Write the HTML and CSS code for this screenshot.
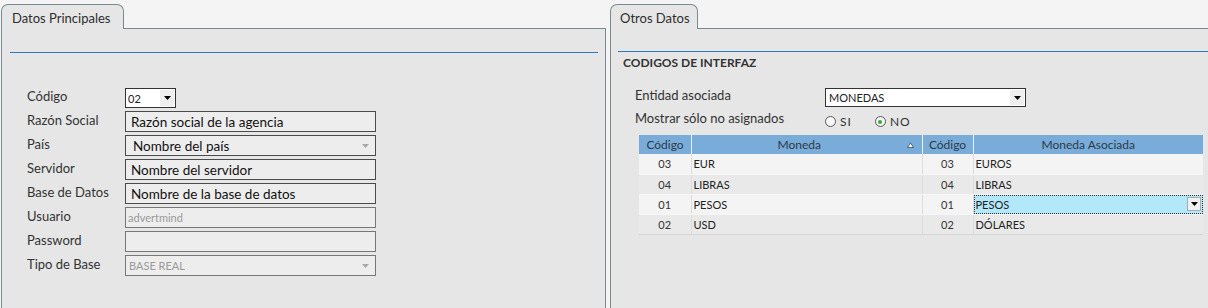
FILE: index.html
```html
<!DOCTYPE html>
<html lang="es">
<head>
    <meta charset="UTF-8">
    <title>Agencia</title>
    <link rel="stylesheet" href="styles.css">
</head>
<body>
    <div class="screen">
        <div class="pane pane-main">
            <div class="tabbar"><div class="tab">Datos Principales</div></div>
            <div class="panel">
                <div class="rule rule-main"></div>
                <div class="form">
                    <div class="label">Código</div>
                    <div class="combo combo-code">
                        <span class="value">02</span>
                        <span class="drop"><svg width="7" height="4" viewBox="0 0 7 4"><path d="M0 0h7L3.5 4z"/></svg></span>
                    </div>

                    <div class="label">Razón Social</div>
                    <div class="field">Razón social de la agencia</div>

                    <div class="label">País</div>
                    <div class="field field-select">
                        <span class="value">Nombre del país</span>
                        <svg class="ghost-arrow" width="7" height="4" viewBox="0 0 7 4"><path d="M0 0h7L3.5 4z"/></svg>
                    </div>

                    <div class="label">Servidor</div>
                    <div class="field">Nombre del servidor</div>

                    <div class="label">Base de Datos</div>
                    <div class="field">Nombre de la base de datos</div>

                    <div class="label">Usuario</div>
                    <div class="field field-off">advertmind</div>

                    <div class="label">Password</div>
                    <div class="field field-off"></div>

                    <div class="label">Tipo de Base</div>
                    <div class="field field-off field-select">
                        <span class="value">BASE REAL</span>
                        <svg class="ghost-arrow" width="7" height="4" viewBox="0 0 7 4"><path d="M0 0h7L3.5 4z"/></svg>
                    </div>
                </div>
            </div>
        </div>

        <div class="pane pane-other">
            <div class="tabbar"><div class="tab">Otros Datos</div></div>
            <div class="panel">
                <div class="rule rule-other"></div>
                <div class="section-title">CODIGOS DE INTERFAZ</div>
                <div class="form form-other">
                    <div class="label">Entidad asociada</div>
                    <div class="combo combo-entity">
                        <span class="value">MONEDAS</span>
                        <span class="drop"><svg width="7" height="4" viewBox="0 0 7 4"><path d="M0 0h7L3.5 4z"/></svg></span>
                    </div>

                    <div class="label">Mostrar sólo no asignados</div>
                    <div class="radios">
                        <span class="radio"></span><span class="radio-text">SI</span>
                        <span class="radio radio-on"></span><span class="radio-text">NO</span>
                    </div>
                </div>

                <table class="grid">
                    <colgroup>
                        <col style="width: 52px">
                        <col style="width: 231px">
                        <col style="width: 51px">
                        <col style="width: 230px">
                    </colgroup>
                    <thead>
                        <tr>
                            <th>Código</th>
                            <th class="sorted"><span>Moneda</span><svg width="7" height="6" viewBox="0 0 7 6"><path d="M3.5 0.8L6.4 5.5H0.6z" fill="#fff" stroke="#3a4a5a" stroke-width="0.8"/></svg></th>
                            <th>Código</th>
                            <th>Moneda Asociada</th>
                        </tr>
                    </thead>
                    <tbody>
                        <tr><td class="code">03</td><td>EUR</td><td class="code">03</td><td>EUROS</td></tr>
                        <tr><td class="code">04</td><td>LIBRAS</td><td class="code">04</td><td>LIBRAS</td></tr>
                        <tr>
                            <td class="code">01</td><td>PESOS</td><td class="code">01</td>
                            <td class="editing">
                                <div class="cell-edit">
                                    <span class="value">PESOS</span>
                                    <span class="drop"><svg width="7" height="4" viewBox="0 0 7 4"><path d="M0 0h7L3.5 4z"/></svg></span>
                                </div>
                            </td>
                        </tr>
                        <tr><td class="code">02</td><td>USD</td><td class="code">02</td><td>DÓLARES</td></tr>
                    </tbody>
                </table>
            </div>
        </div>
    </div>
</body>
</html>
```

FILE: styles.css
```css
* {
    margin: 0;
    padding: 0;
    box-sizing: border-box;
}

body {
    font-family: Lato, "Noto Sans", sans-serif;
    background-color: #f4f4f4;
    color: #333;
    height: 308px;
    overflow: hidden;
}

.screen {
    display: flex;
    height: 308px;
}

.pane {
    display: flex;
    flex-direction: column;
}

.pane-main {
    width: 605px;
    margin-left: 1px;
}

.pane-other {
    flex: 1;
    margin-left: 4px;
    margin-right: -10px;
}

.tabbar {
    height: 28px;
    display: flex;
    align-items: flex-end;
}

.tab {
    position: relative;
    z-index: 1;
    height: 25px;
    margin-bottom: -1px;
    padding: 5px 0 0 10px;
    background-color: #e6e6e6;
    border: 1px solid #7b8a8e;
    border-bottom: none;
    border-radius: 7px 7px 0 0;
    font-size: 13px;
    color: #2e2e2e;
}

.pane-main .tab {
    width: 123px;
}

.pane-other .tab {
    width: 88px;
    padding-left: 9px;
}

.panel {
    flex: 1;
    background-color: #e6e6e6;
    border: 1px solid #7b8a8e;
    border-bottom: none;
}

.rule {
    border-top: 1px solid #2a7bc4;
}

.rule-main {
    margin: 23px 7px 0 8px;
}

.rule-other {
    margin: 22px 0 0 7px;
}

.section-title {
    margin: 4px 0 0 12px;
    font-size: 12px;
    font-weight: bold;
    line-height: 14px;
    color: #333;
}

.form {
    display: grid;
    grid-template-columns: 98px 251px;
    grid-auto-rows: 21px;
    row-gap: 3px;
    padding-left: 25px;
    margin-top: 34px;
}

.label {
    font-size: 13px;
    line-height: 18px;
    color: #333;
}

.field {
    display: flex;
    align-items: center;
    height: 21px;
    padding-left: 5px;
    background-color: #ededed;
    border: 1px solid #4a4a4a;
    font-size: 13.5px;
    color: #111;
}

.field-select {
    padding-left: 7px;
}

.field-select .value {
    flex: 1;
}

.ghost-arrow {
    fill: #aaa;
    margin-right: 6px;
}

.field-off {
    padding-left: 2px;
    border-color: #777;
    font-size: 11px;
    color: #9a9a9a;
}

.field-off.field-select {
    padding-left: 3px;
}

.combo {
    display: flex;
    align-items: center;
    background-color: #fff;
    border: 1px solid #333;
    font-size: 11px;
    color: #222;
}

.combo .value {
    flex: 1;
    padding-left: 2px;
}

.combo .drop {
    align-self: stretch;
    width: 14px;
    margin: 1px;
    background-color: #efefef;
    display: flex;
    align-items: center;
    justify-content: center;
}

.combo-code {
    width: 51px;
    height: 20px;
    margin-top: 1px;
}

.form-other {
    grid-template-columns: 190px 201px;
    grid-template-rows: 21px 23px;
    row-gap: 2px;
    padding-left: 24px;
    margin-top: 16px;
}

.combo-entity {
    height: 19px;
    margin-top: 2px;
}

.combo-entity .value {
    padding-left: 3px;
}

.radios {
    display: flex;
    align-items: center;
    padding-top: 2px;
}

.radio {
    width: 11px;
    height: 11px;
    border: 1px solid #555;
    border-radius: 50%;
    background-color: #f7f7f7;
    display: flex;
    align-items: center;
    justify-content: center;
}

.radio-on::after {
    content: "";
    width: 4px;
    height: 4px;
    border-radius: 50%;
    background-color: #2fae3a;
}

.radio-text {
    font-size: 12px;
    letter-spacing: 1px;
    margin-left: 4px;
    margin-right: 23px;
    color: #333;
}

.grid {
    margin: 3px 0 0 28px;
    width: 564px;
    table-layout: fixed;
    border-collapse: collapse;
    font-size: 11px;
    color: #222;
}

.grid th {
    height: 19px;
    padding: 0;
    background-color: #79acd9;
    border-left: 1px solid #e8f1fa;
    font-size: 12px;
    font-weight: normal;
    color: #2c3a48;
    text-align: center;
}

.grid th:first-child {
    border-left: none;
}

.grid th.sorted {
    display: flex;
    align-items: center;
    height: 19px;
}

.grid th.sorted span {
    flex: 1;
}

.grid th.sorted svg {
    margin-right: 8px;
}

.grid td {
    height: 20px;
    padding: 0 0 0 2px;
    border-left: 1px solid #dcdcdc;
    border-bottom: 1px solid #f6f6f6;
    white-space: nowrap;
}

.grid td:first-child {
    border-left: none;
}

.grid tbody tr:nth-child(odd) td {
    background-color: #f4f4f4;
}

.grid tbody tr:nth-child(even) td {
    background-color: #e9e9e9;
}

.grid tbody tr:last-child td {
    border-bottom: 1px solid #d6d6d6;
}

.grid td.code {
    text-align: center;
    padding: 0;
    color: #333;
}

.grid td.editing {
    padding: 0;
}

.cell-edit {
    display: flex;
    align-items: center;
    height: 19px;
    background-color: #b3e8fb;
    border: 1px dotted #333;
}

.cell-edit .value {
    flex: 1;
    padding-left: 1px;
}

.cell-edit .drop {
    width: 14px;
    height: 14px;
    margin-right: 1px;
    background-color: #f0f0f0;
    border: 1px solid #aaa;
    display: flex;
    align-items: center;
    justify-content: center;
}
```
